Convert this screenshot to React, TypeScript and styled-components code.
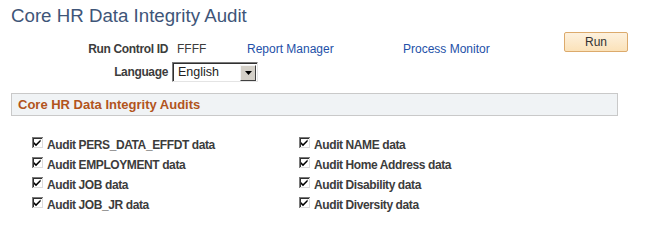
import React from 'react';
import styled, { createGlobalStyle } from 'styled-components';

const GlobalStyle = createGlobalStyle`
  body {
    margin: 0;
    background: #ffffff;
    font-family: 'Liberation Sans', Arial, sans-serif;
  }
`;

const titleColor = '#3e5578';
const labelColor = '#3c3c3c';
const linkColor = '#2350a8';

const Page = styled.div`
  width: 655px;
  height: 228px;
  overflow: hidden;
`;

const Title = styled.h1`
  margin: 6px 0 0 11px;
  font-size: 18.7px;
  line-height: 20px;
  font-weight: normal;
  color: ${titleColor};
`;

const FieldRow = styled.div<{ $align: string }>`
  display: grid;
  grid-template-columns: 172px 75px 156px 161px 64px;
  align-items: ${p => p.$align};
  font-size: 12px;
  line-height: 14px;
`;

const Label = styled.span`
  justify-self: end;
  padding-right: 4px;
  font-weight: bold;
  letter-spacing: -0.35px;
  color: ${labelColor};
`;

const Value = styled.span`
  padding-left: 5px;
  color: ${labelColor};
`;

const Link = styled.a`
  color: ${linkColor};
  text-decoration: none;
  cursor: pointer;
`;

const RunButton = styled.button`
  width: 64px;
  height: 20px;
  margin-bottom: 4px;
  padding: 0;
  border: 1px solid #dcaa6c;
  border-radius: 2px;
  background: linear-gradient(#fdf1de, #fbe2b9);
  font-family: inherit;
  font-size: 12px;
  color: #333333;
`;

const SelectBox = styled.div`
  display: flex;
  align-items: center;
  box-sizing: border-box;
  width: 86px;
  height: 20px;
  border-style: solid;
  border-width: 1px;
  border-color: #7a7a7a #e4e4e4 #e4e4e4 #7a7a7a;
  background: #ffffff;
  box-shadow: inset 1px 1px 0 #303030;
`;

const SelectValue = styled.span`
  flex: 1;
  padding-left: 5px;
  font-size: 12.5px;
  color: #222222;
`;

const SelectArrow = styled.span`
  display: flex;
  align-items: center;
  justify-content: center;
  box-sizing: border-box;
  width: 16px;
  height: 16px;
  margin: 1px 1px 0 0;
  background: #d4d0c8;
  border-style: solid;
  border-width: 1px;
  border-color: #f4f4f4 #404040 #404040 #f4f4f4;
`;

const SectionBar = styled.div`
  box-sizing: border-box;
  width: 607px;
  height: 23px;
  margin: 11px 0 0 11px;
  padding-left: 6px;
  border: 1px solid #c9c9c9;
  background: #f0f3f5;
  font-size: 13px;
  line-height: 21px;
  font-weight: bold;
  color: #b2541c;
`;

const AuditGrid = styled.div`
  display: grid;
  grid-template-columns: 267px auto;
  grid-auto-flow: column;
  grid-template-rows: repeat(4, 20px);
  margin-top: 19px;
  padding-left: 32px;
`;

const CheckRow = styled.label`
  display: flex;
  align-items: flex-start;
  gap: 4px;
  font-size: 12px;
  line-height: 20px;
  font-weight: bold;
  letter-spacing: -0.4px;
  color: ${labelColor};
`;

const CheckIcon = styled.svg`
  flex: none;
  margin-top: 2px;
`;

const Checkbox = () => (
  <CheckIcon width="11" height="11" viewBox="0 0 11 11" shapeRendering="crispEdges">
    <rect x="0" y="0" width="11" height="11" fill="#ffffff" />
    <path d="M0.5 10.5 V0.5 H10.5" fill="none" stroke="#7a7a7a" />
    <path d="M1.5 9.5 V1.5 H9.5" fill="none" stroke="#303030" />
    <path d="M1 10.5 H10.5 V1" fill="none" stroke="#dcdcdc" />
    <path d="M2 5 L4 7 L8.6 2.4 V4.6 L4 9.2 L2 7.2 Z" fill="#000000" shapeRendering="auto" />
  </CheckIcon>
);

const audits = [
  'Audit PERS_DATA_EFFDT data',
  'Audit EMPLOYMENT data',
  'Audit JOB data',
  'Audit JOB_JR data',
  'Audit NAME data',
  'Audit Home Address data',
  'Audit Disability data',
  'Audit Diversity data',
];

export default function App() {
  return (
    <Page>
      <GlobalStyle />
      <Title>Core HR Data Integrity Audit</Title>
      <div style={{ marginTop: 6 }}>
        <FieldRow $align="end">
          <Label>Run Control ID</Label>
          <Value>FFFF</Value>
          <Link>Report Manager</Link>
          <Link>Process Monitor</Link>
          <RunButton>Run</RunButton>
        </FieldRow>
      </div>
      <div style={{ marginTop: 6 }}>
        <FieldRow $align="center">
          <Label>Language</Label>
          <SelectBox>
            <SelectValue>English</SelectValue>
            <SelectArrow>
              <svg width="7" height="4" viewBox="0 0 7 4">
                <path d="M0 0 H7 L3.5 4 Z" fill="#000000" />
              </svg>
            </SelectArrow>
          </SelectBox>
        </FieldRow>
      </div>
      <SectionBar>Core HR Data Integrity Audits</SectionBar>
      <AuditGrid>
        {audits.map(a => (
          <CheckRow key={a}>
            <Checkbox />
            {a}
          </CheckRow>
        ))}
      </AuditGrid>
    </Page>
  );
}
